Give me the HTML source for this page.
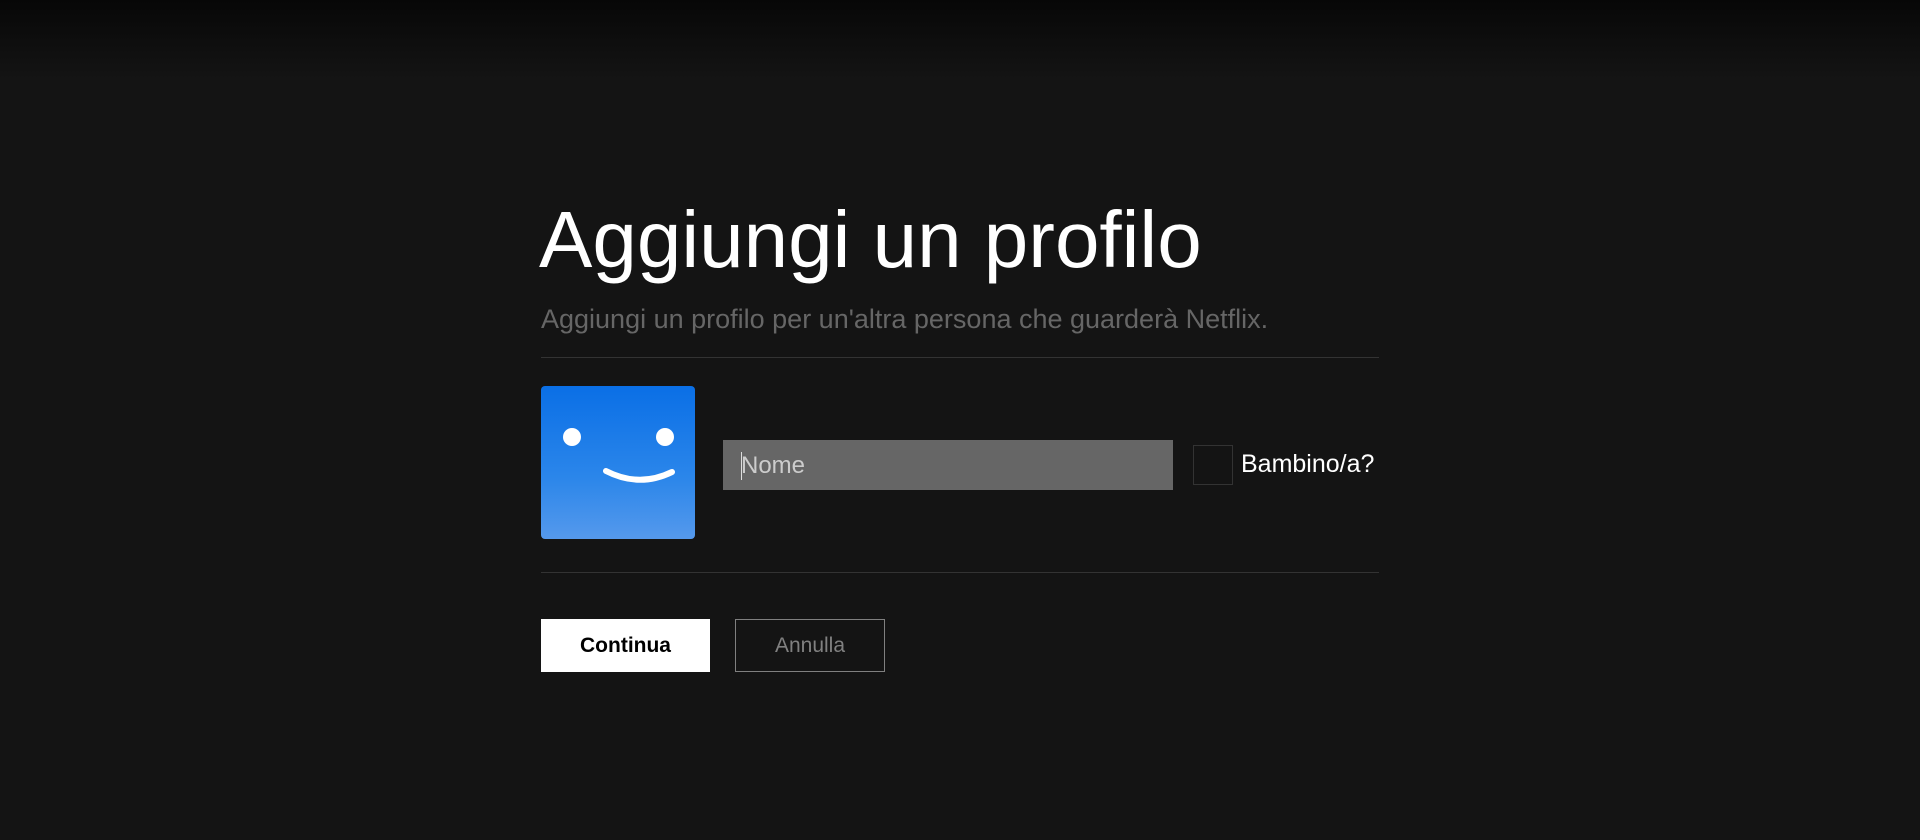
<!DOCTYPE html>
<html><head><meta charset="utf-8"><style>
html,body{margin:0;padding:0;}
body{width:1920px;height:840px;background:#141414;position:relative;overflow:hidden;font-family:"Liberation Sans",sans-serif;}
.top{position:absolute;left:0;top:0;width:1920px;height:80px;background:linear-gradient(#070707,#141414);}
.a{position:absolute;}
h1{position:absolute;left:539px;top:190px;margin:0;font-size:80px;font-weight:400;color:#fff;line-height:100px;white-space:nowrap;}
.sub{left:541px;top:304px;font-size:27px;color:#666;white-space:nowrap;}
.line{left:541px;width:838px;height:1px;background:#333;}
.av{left:541px;top:386px;width:154px;height:153px;border-radius:4px;background:linear-gradient(#0a6fe6,#2b86ea 60%,#5599ec);}
.inp{left:723px;top:440px;width:450px;height:50px;background:#666;}
.inp span{position:absolute;left:18px;top:12px;font-size:24px;color:#ccc;}
.inp i{position:absolute;left:18px;top:12px;width:1px;height:28px;background:#ddd;}
.cb{left:1193px;top:445px;width:38px;height:38px;border:1px solid #333;}
.bl{left:1241px;top:450px;font-size:25px;color:#fff;}
.btn{top:619px;height:53px;font-size:21px;text-align:center;line-height:53px;box-sizing:border-box;}
</style></head><body>
<div class="top"></div>
<h1>Aggiungi un profilo</h1>
<div class="a sub">Aggiungi un profilo per un'altra persona che guarderà Netflix.</div>
<div class="a line" style="top:357px"></div>
<div class="a av"><svg width="154" height="153" viewBox="0 0 154 153"><circle cx="31" cy="51" r="9" fill="#fff"/><circle cx="124" cy="51" r="9" fill="#fff"/><path d="M65 85 Q98 102 131 86" stroke="#fff" stroke-width="6" fill="none" stroke-linecap="round"/></svg></div>
<div class="a inp"><i></i><span>Nome</span></div>
<div class="a cb"></div>
<div class="a bl">Bambino/a?</div>
<div class="a line" style="top:572px"></div>
<div class="a btn" style="left:541px;width:169px;background:#fff;color:#000;font-weight:bold;">Continua</div>
<div class="a btn" style="left:735px;width:150px;border:1px solid #808080;color:#808080;line-height:51px;">Annulla</div>
</body></html>
